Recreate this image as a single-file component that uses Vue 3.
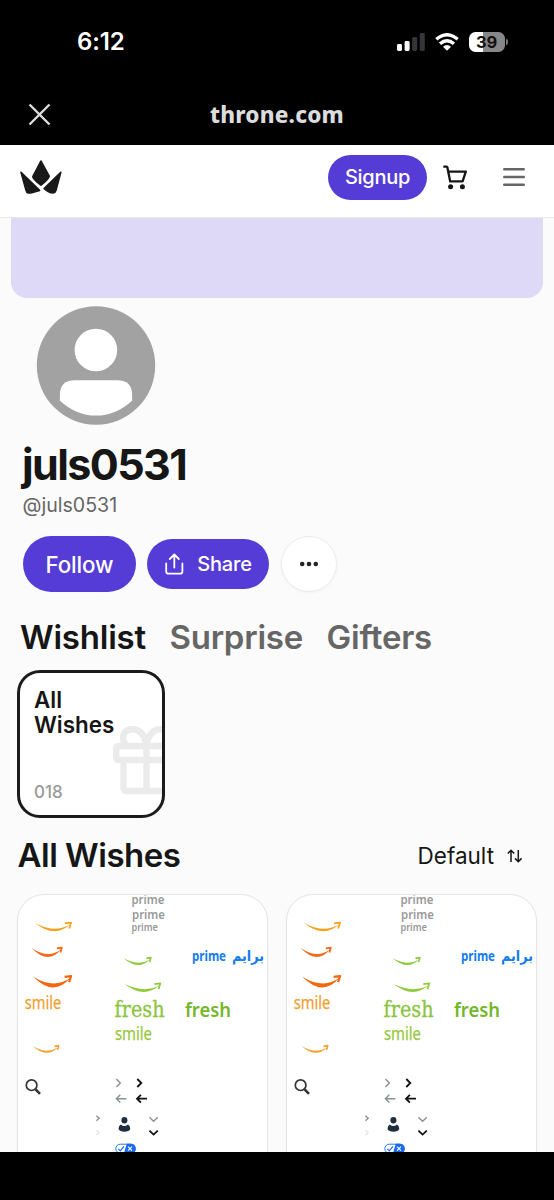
<script setup>
const products = [1, 2]
const smiles = [
  { x: 17, y: 28, w: 37, h: 8.5, t: 2.6, c: '#f5a11b' },
  { x: 13.7, y: 53, w: 31, h: 9, t: 3.2, c: '#f26a1b' },
  { x: 15, y: 81.5, w: 39, h: 10.5, t: 4.2, c: '#f7670a' },
  { x: 105.3, y: 63, w: 28.5, h: 7, t: 2.4, c: '#8fca3c' },
  { x: 106.3, y: 88.7, w: 37, h: 8, t: 2.9, c: '#8fca3c' },
  { x: 14.6, y: 151, w: 27, h: 6.8, t: 2.3, c: '#f5a033' },
]
const swoosh = (s) => {
  const ex = s.x + s.w - 1.8
  const ey = s.y + 1.6
  return `M${s.x} ${s.y} Q${s.x + s.w * 0.53} ${s.y + s.h * 1.25} ${ex} ${ey} Q${s.x + s.w * 0.53} ${s.y + s.h * 1.25 + s.t * 1.9} ${s.x} ${s.y}Z`
}
const tip = (s) => {
  const x = s.x + s.w
  const k = s.w / 37
  return `M${x - 7 * k} ${s.y + 0.4} L${x - 0.9} ${s.y - 0.4} L${x - 2.8 * k} ${s.y + 5.4 * k}`
}
</script>

<template>
  <div class="screen">
    <div class="status">
      <span class="clock">6:12</span>
      <div class="indicators">
        <svg width="28" height="18" viewBox="0 0 28 18">
          <rect x="0" y="11" width="5" height="7" rx="1.4" fill="#fff" />
          <rect x="7.6" y="8" width="5" height="10" rx="1.4" fill="#fff" />
          <rect x="15.2" y="4" width="5" height="14" rx="1.4" fill="#363638" />
          <rect x="22.8" y="0" width="5" height="18" rx="1.4" fill="#363638" />
        </svg>
        <svg class="wifi" width="24" height="18" viewBox="0 0 24 18">
          <g fill="none" stroke="#fff" stroke-width="3.3">
            <path d="M1.3 6.3 Q12 -2.9 22.7 6.3" />
            <path d="M5 10.7 Q12 4.8 19 10.7" />
          </g>
          <path d="M8 13.8 Q12 10.4 16 13.8 L12 17.8Z" fill="#fff" />
        </svg>
        <div class="battery"><span>39</span></div>
        <i class="nub"></i>
      </div>
    </div>

    <div class="browser">
      <svg width="23" height="23" viewBox="0 0 23 23"><path d="M1.5 1.5 21.5 21.5M21.5 1.5 1.5 21.5" stroke="#dcdcdc" stroke-width="2.4" /></svg>
      <span class="domain">throne.com</span>
    </div>

    <header class="nav">
      <svg class="crown" width="42" height="35" viewBox="0 0 42 35">
        <g fill="#191919" stroke="#191919" stroke-width="1.6" stroke-linejoin="round">
          <path d="M20.9 1 L29.2 16.2 Q29.3 18.5 21 25.2 Q12.7 18.8 12.8 16.6Z" />
          <path d="M1 12.2 L19.6 30.4 Q12 32.9 8 33 Q6.6 32.8 6 30.4Z" />
          <path d="M40.8 12.2 L24.1 28.5 Q28.5 32.9 33.2 33 Q35.4 32.8 36 30.4Z" />
        </g>
      </svg>
      <button class="signup">Signup</button>
      <svg class="cart" width="24" height="25" viewBox="0 0 24 25">
        <path d="M.3 1.6 H3.6 Q4.2 1.6 4.4 2.4 L7.2 16.4 H19.6 L22.8 6.6 H5.3" fill="none" stroke="#161616" stroke-width="2.3" stroke-linejoin="round" />
        <circle cx="7.6" cy="21.8" r="2.5" fill="#161616" /><circle cx="19.4" cy="21.8" r="2.5" fill="#161616" />
      </svg>
      <svg class="menu" width="22" height="20" viewBox="0 0 22 20"><path d="M1.3 2.2H20.7M1.3 10H20.7M1.3 17.7H20.7" stroke="#666" stroke-width="2.6" stroke-linecap="round" /></svg>
    </header>

    <main>
      <div class="banner"></div>
      <svg class="avatar" width="120" height="119" viewBox="0 0 120 119">
        <circle cx="60" cy="59.5" r="59.2" fill="#a2a2a2" />
        <circle cx="59.9" cy="44" r="21.3" fill="#fff" />
        <path d="M23.9 94.7 V89 Q23.9 74.3 38.9 74.3 H81.3 Q96.1 74.3 96.1 89 V94.7 Q79.6 109.6 60 109.6 Q40.4 109.6 23.9 94.7Z" fill="#fff" />
      </svg>
      <h1>juls0531</h1>
      <p class="handle">@juls0531</p>

      <div class="actions">
        <button class="follow">Follow</button>
        <button class="share">
          <svg width="19" height="22" viewBox="0 0 19 22"><path d="M1.2 10.5V18.5Q1.2 20.7 3.4 20.7H15.2Q17.4 20.7 17.4 18.5V10.5M9.3 14.5V1.8M4.8 6 9.3 1.5 13.8 6" fill="none" stroke="#fff" stroke-width="1.8" stroke-linecap="round" stroke-linejoin="round" /></svg>
          <span>Share</span>
        </button>
        <button class="more" aria-label="More">
          <svg width="20" height="6" viewBox="0 0 20 6" fill="#222"><circle cx="3.2" cy="3" r="2.3" /><circle cx="10" cy="3" r="2.3" /><circle cx="16.8" cy="3" r="2.3" /></svg>
        </button>
      </div>

      <nav class="tabs">
        <span class="active">Wishlist</span><span>Surprise</span><span>Gifters</span>
      </nav>

      <div class="collection">
        <strong>All<br />Wishes</strong>
        <span>018</span>
        <svg class="gift" width="66" height="70" viewBox="0 0 66 70">
          <g fill="none" stroke="#ebebeb" stroke-width="6.4" stroke-linejoin="round">
            <rect x="3.2" y="20" width="60" height="14" rx="2" />
            <path d="M10.5 34V61.5Q10.5 65 14 65H52.5Q56 65 56 61.5V34M33.5 20V65" />
            <path d="M33.5 20Q31 3.2 19.5 3.2Q10.2 3.8 10.2 12Q10.2 17 14 20M33.5 20Q36 3.2 47.5 3.2Q56.8 3.8 56.8 12Q56.8 17 53 20" />
          </g>
        </svg>
      </div>

      <div class="section">
        <h2>All Wishes</h2>
        <div class="sort">
          <span>Default</span>
          <svg width="16" height="14" viewBox="0 0 16 14"><path d="M4 13V1.4M.8 4.6 4 1.3 7.2 4.6M11.3 1V12.6M8 9.4 11.3 12.7 14.6 9.4" fill="none" stroke="#161616" stroke-width="1.5" /></svg>
        </div>
      </div>

      <div class="products">
        <article v-for="p in products" :key="p">
          <svg width="250" height="262" viewBox="0 0 250 262">
            <g v-for="(s, i) in smiles" :key="i">
              <path :d="swoosh(s)" :fill="s.c" />
              <path :d="tip(s)" :stroke="s.c" :stroke-width="s.t * 0.3 + 0.9" fill="none" stroke-linejoin="round" />
            </g>
            <g class="ember" fill="#999">
              <text x="113.4" y="9" font-size="12.6" font-weight="600" textLength="33" lengthAdjust="spacingAndGlyphs">prime</text>
              <text x="114" y="23.5" font-size="12.6" font-weight="600" textLength="33" lengthAdjust="spacingAndGlyphs">prime</text>
              <text x="113.4" y="35.6" font-size="10.4" font-weight="600" textLength="26.5" lengthAdjust="spacingAndGlyphs">prime</text>
            </g>
            <g class="ember">
              <text x="6.8" y="113.6" font-size="18" fill="#f0a030" stroke="#f0a030" stroke-width=".25" textLength="36.6" lengthAdjust="spacingAndGlyphs">smile</text>
              <text x="97" y="145" font-size="18" fill="#95c93d" stroke="#95c93d" stroke-width=".25" textLength="37" lengthAdjust="spacingAndGlyphs">smile</text>
              <text x="167" y="121.6" font-size="20.5" font-weight="600" fill="#74b72b" textLength="46" lengthAdjust="spacingAndGlyphs">fresh</text>
              <text x="174" y="66.2" font-size="14.5" font-weight="700" fill="#127cf0" textLength="34" lengthAdjust="spacingAndGlyphs">prime</text>
            </g>
            <text class="arabic" x="214" y="66" font-size="15" textLength="32" lengthAdjust="spacingAndGlyphs">برايم</text>
            <text class="serif" x="96.6" y="121.6" font-size="21.5" textLength="50" lengthAdjust="spacingAndGlyphs">fresh</text>
            <g fill="none" stroke="#333" stroke-width="1.7">
              <circle cx="13.6" cy="190.2" r="5.3" />
              <path d="M17.6 194.3 22 198.8" stroke-width="2.6" />
            </g>
            <g fill="none" stroke="#8b9292" stroke-width="1.4">
              <path d="M98.4 184 102.4 188 98.4 192M108.4 203.7H98.4M102.3 199.8 98.4 203.7 102.3 207.6M131.4 222.3 135.6 226.3 139.8 222.3M78.4 220.8 81.2 223.3 78.4 225.8" />
              <path d="M78.4 235 81.2 237.5 78.4 240" stroke="#e6e6e6" />
            </g>
            <path d="M119.3 184 123.3 188 119.3 192M129 203.7H119M122.9 199.8 119 203.7 122.9 207.6M131.4 235.6 135.6 239.6 139.8 235.6" fill="none" stroke="#111" stroke-width="1.8" />
            <g fill="#202f40"><ellipse cx="106.4" cy="225.3" rx="3" ry="3.3" /><path d="M102.8 229.6Q106.4 232.6 110 229.6Q112.3 231 112.3 234Q111 236.8 106.4 236.8Q101.8 236.8 100.5 234Q100.5 231 102.8 229.6Z" /></g>
            <rect x="97.8" y="249.2" width="19.4" height="9" rx="4.5" fill="#fff" stroke="#2277f2" />
            <path d="M108.8 248.7H112.7Q117.7 248.7 117.7 253.7Q117.7 258.7 112.7 258.7H105.8Z" fill="#1769ed" />
            <path d="M100.3 253.8 102.3 255.8 106 251.4" fill="none" stroke="#1769ed" stroke-width="1.2" />
            <path d="M110 251.7 114 255.7M114 251.7 110 255.7" stroke="#fff" stroke-width="1.1" />
          </svg>
        </article>
      </div>
    </main>
    <div class="bottom"></div>
  </div>
</template>

<style>
body { margin: 0; background: #000; }
</style>

<style scoped>
* { box-sizing: border-box; }
.screen { width: 554px; height: 1200px; display: flex; flex-direction: column; overflow: hidden; background: #000; font-family: Inter, "Liberation Sans", sans-serif; color: #161616; }
button { border: 0; padding: 0; font-family: inherit; display: flex; align-items: center; justify-content: center; flex: none; }
h1, h2, p { margin: 0; white-space: nowrap; }
svg { display: block; flex: none; }
.status { height: 83px; flex: none; display: flex; justify-content: space-between; padding: 0 46px 0 77px; align-items: center; color: #fff; }
.clock { font-size: 24px; font-weight: 600; letter-spacing: -0.1px; }
.indicators { display: flex; align-items: center; }
.wifi { margin-left: 10px; }
.battery { margin-left: 10px; width: 36px; height: 20px; border-radius: 6.5px; background: linear-gradient(90deg, #fff 14px, #878787 14px); display: flex; align-items: center; justify-content: center; color: #111; font-size: 16.5px; font-weight: 700; letter-spacing: -0.2px; padding-right: 1px; }
.nub { width: 2px; height: 6px; border-radius: 0 3px 3px 0; background: #777; margin-left: 1px; }
.browser { height: 62px; flex: none; display: flex; align-items: center; padding-left: 28px; }
.domain { margin-left: 159px; font-family: "Noto Sans", sans-serif; font-weight: 800; font-size: 22.5px; color: #dcdcdc; letter-spacing: 0.2px; }
.nav { height: 73px; flex: none; background: #fff; border-bottom: 1px solid #e9e9ed; display: flex; align-items: center; padding: 0 29px 8px 20px; }
.signup { margin-left: auto; width: 99px; height: 45px; border-radius: 23px; background: #563cd6; color: #fff; font-size: 20px; font-weight: 500; letter-spacing: -0.3px; }
.cart { margin-left: 16px; }
.menu { margin-left: 36px; }
main { height: 934px; flex: none; background: #fbfbfb; overflow: hidden; display: flex; flex-direction: column; }
.banner { height: 80px; flex: none; margin: 0 11px; background: #ddd9f6; border-radius: 0 0 16px 16px; }
.avatar { margin: 8px 0 0 36px; }
h1 { height: 52px; line-height: 52px; margin: 13px 0 0 22px; font-size: 43px; font-weight: 700; letter-spacing: -1.6px; }
.handle { height: 26px; line-height: 27px; margin: 2px 0 0 22.5px; font-size: 19.6px; color: #666; }
.actions { height: 56px; flex: none; margin: 18px 0 0 23px; display: flex; align-items: center; }
.follow { width: 113px; height: 56px; border-radius: 28px; background: #563cd6; color: #fff; font-size: 22.3px; font-weight: 500; letter-spacing: -0.1px; }
.share { width: 122px; height: 50px; margin-left: 11px; border-radius: 25px; background: #563cd6; color: #fff; font-size: 20px; font-weight: 500; letter-spacing: -0.2px; gap: 13px; padding-left: 1px; }
.more { width: 56px; height: 56px; margin-left: 12px; border-radius: 50%; background: #fff; border: 1px solid #ececec; box-shadow: 0 1px 3px #0000000a; }
.tabs { height: 44px; flex: none; margin: 23px 0 0 20px; display: flex; align-items: center; gap: 23.5px; font-size: 33px; font-weight: 600; color: #666; letter-spacing: -0.22px; }
.active { color: #161616; }
.collection { position: relative; width: 148px; height: 148px; flex: none; margin: 11px 0 0 17px; border: 3px solid #1b1b1b; border-radius: 23px; background: #fff; overflow: hidden; padding: 14px 14px 15px; display: flex; flex-direction: column; justify-content: space-between; }
.collection strong { font-size: 22.4px; line-height: 25px; font-weight: 600; position: relative; z-index: 1; }
.collection span { font-size: 17px; line-height: 16px; font-weight: 500; color: #999; }
.gift { position: absolute; left: 93px; top: 53px; }
.section { height: 77px; flex: none; display: flex; align-items: center; justify-content: space-between; padding: 0 31px 2px 17.5px; }
h2 { font-size: 33px; font-weight: 600; letter-spacing: -0.5px; padding-bottom: 2px; }
.sort { display: flex; align-items: center; gap: 13px; font-size: 22.5px; }
.products { display: flex; gap: 18px; padding-left: 17px; margin-top: -1px; }
article { width: 251px; height: 290px; border: 1px solid #e5e5e5; border-radius: 27px; overflow: hidden; background: #fff; flex: none; box-shadow: 0 1px 3px #0000000a; }
.ember { font-family: "Noto Sans", sans-serif; }
.arabic { font-family: "DejaVu Sans", sans-serif; font-weight: 700; fill: #127cf0; }
.serif { font-family: "DejaVu Serif", serif; fill: #8bc53f; stroke: #8bc53f; stroke-width: 0.3px; }
.bottom { flex: 1; background: #000; }
</style>
